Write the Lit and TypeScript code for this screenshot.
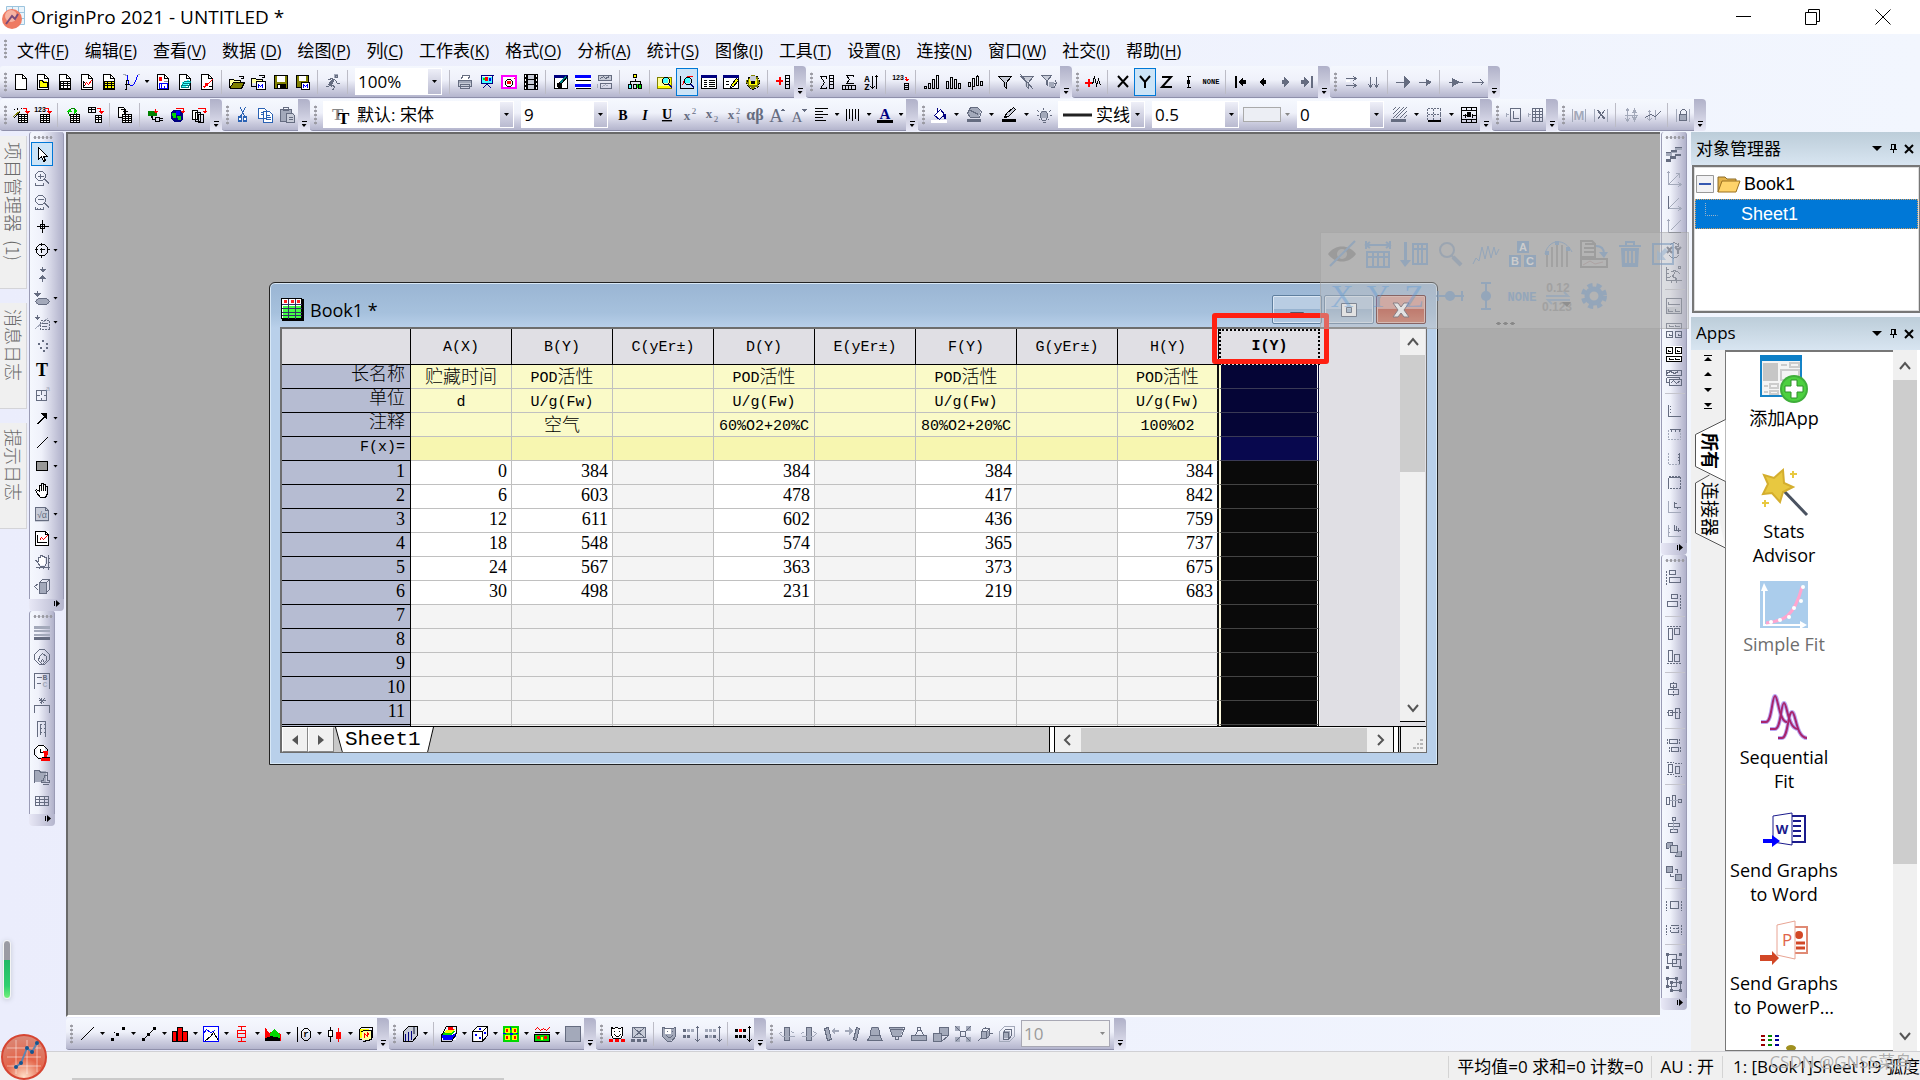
import { LitElement, html, svg, css, nothing, TemplateResult } from "lit";
import { customElement, property } from "lit/decorators.js";
import { classMap } from "lit/directives/class-map.js";

/* ---------- icon notation ----------
 * An icon is a list of layers on a 16x16 grid, parted by "|".
 *   f<colour> <path>   filled path
 *   s<colour> <path>   one pixel stroke, aligned to the pixel grid
 *   S<colour> <path>   two pixel smooth stroke
 *   d<colour> <path>   dotted stroke
 *   t<colour> x y size style text
 */
const COLORS: Record<string, string> = {
  k: "#000", w: "#fff", g: "#656c80", l: "#a3a9ba", r: "#f00", b: "#00f", n: "#000080",
  y: "#ff0", Y: "#ffff9c", o: "#808000", G: "#008000", L: "#00d800", c: "#4ff", t: "#008080",
  m: "#f0f", B: "#2a62b4", e: "#c8ccd8", h: "#999",
};
const FACE: Record<string, string> = {
  b: "font:bold 1px 'Liberation Serif',serif",
  i: "font:italic bold 1px 'Liberation Serif',serif",
  u: "font:bold 1px 'Liberation Serif',serif;text-decoration:underline",
  n: "font:1px 'Liberation Serif',serif",
  s: "font:1px 'Liberation Sans',sans-serif",
  S: "font:bold 1px 'Liberation Sans',sans-serif",
  m: "font:bold 1px 'Liberation Mono',monospace",
};
const PAGE = "fw M2 0h8l4 4v12h-12z|sk M2 0h7l4 4v11h-11z M9 0v4h4|";
const GPAGE = "fe M1 1h11l3 3v12h-14z|sg M1 1h10l3 3v10h-13z M11 1v3h3|";
const GRID = "sk M3 7h10v7h-10z M3 9h10 M3 11h10 M6 7v7 M10 7v7";
const TABLE = "fw M5 7h10v8h-10z|sk M5 7h9v8h-9z M5 9h9 M5 11h9 M5 13h9 M8 7v8 M11 7v8|";
const REDTURN = "sr M9 1h4v3|fr M11 4h6l-3 3z|";
const LENS = "fc M6 4h5v5h-5z|sk M7 3h3l2 2v3l-2 2h-3l-2-2v-3z|sn M11 10l4 4 M12 10l3 3|";

const ICONS: Record<string, string> = {
  "new-project": PAGE,
  "new-folder": PAGE + "fy M4 7h8v6h-8z|sk M4 6h3l1 2h4v5h-8z",
  "new-workbook": PAGE + GRID,
  "new-graph": PAGE + "sk M4 6v7h8 M4 8h1 M4 11h1|sr M5 11l2-3l2 2l3-4",
  "new-matrix": PAGE + "fy M3 7h10v8h-10z|" + GRID,
  "new-function": "sb M4 1c1 14 6 14 10 0|sl M0 0l4 1 M14 0l2 0|sk M5 6h-2v9h-2 M1 10h5",
  "new-layout": PAGE + "fr M4 3h3v4h-3z|sb M4 9h8v5h-8z M6 9v4 M9 11v2|sh M8 7h4",
  "new-notes": PAGE + "fc M5 8l6-2l2 2l-4 5l-5 1z|st M4 12l3-5h6l-2 6h-7z M6 9h6 M5 11h6",
  "new-excel": PAGE + "sr M4 14l9-9 M3 12l3 0l7-7|fr M6 9h3v3h-3z|sk M9 12h3",
  open: "fo M1 14l3-6h11l-3 6z|fY M1 5h4l1 1h5v2h-7l-3 5z|sk M0 13v-8h4l1 1h6v2 M0 14h12l3-6h-11l-4 6 M9 3c2-2 3-2 5 0 M14 1v3h-3",
  "open-template": "fY M0 5h4l1 1h6v3h-11z|sk M0 12v-8h4l1 1h6v2 M7 2c2-2 4-2 6 0 M13 0v3h-3 M0 12h4|fw M5 8h9v8h-9z|sk M5 7h9v8h-9z|sb M7 13v-3l2 2l2-2v3",
  save: "fo M1 1h14v14h-14z|sk M1 1h13v13h-13z|fw M4 2h8v6h-8z|fk M4 10h9v5h-9z|fw M5 11h2v3h-2z",
  "save-template": "fo M1 1h13v13h-13z|sk M1 1h12v12h-12z|fw M4 2h7v5h-7z|fw M6 9h9v7h-9z|sk M6 8h8v7h-8z|sb M8 13v-3l2 2l2-2v3",
  run: "fl M9 0h4v4h-4z|sg M10 1h2v2h-2z M3 5l4-1l3 2l2 3h2 M8 5l-3 5l4 2l-1 3h-2 M5 10l-2 2h-3 M9 5l-3 5 M7 5l-4 5l4 2",
  print: "fe M1 6h14v6h-14z|fw M4 1h8v5h-8z|sg M4 5l1-4h7l-1 4 M1 6h13v6h-13z M3 10h9v4h-9z M1 8h13|fl M2 7h12v2h-12z",
  slideshow: "sn M1 1h13 M2 1v8h11v-8 M7 10l-4 4 M8 10l4 4|fc M3 3h10v6h-10z|fL M4 4h2v2h-2z|fr M6 3h3v4h-3z|fb M10 4h2v3h-2z",
  recorder: "fm M0 1h16v14h-16z|fw M2 3h12v10h-12z|sk M6 5h3l2 2v3l-2 2h-3l-2-2v-3z|fr M6 7h4v3h-4z|sr M12 4h1",
  film: "fk M1 0h14v16h-14z|fe M5 1h6v4h-6z M5 6h6v4h-6z M5 11h6v4h-6z|fw M2 1h1v2h-1z M2 5h1v2h-1z M2 9h1v2h-1z M2 13h1v2h-1z M13 1h1v2h-1z M13 5h1v2h-1z M13 9h1v2h-1z M13 13h1v2h-1z",
  "edit-page": "fw M1 1h13v14h-13z|sk M1 1h13v13h-13z|fn M1 1h14v3h-14z|ft M5 9l7-7l2 2l-6 7z|sk M4 13l4-4l6-7 M4 13l2-5|fk M4 9h5v5h-4z",
  "split-rows": "fw M0 1h16v14h-16z|fb M0 1h16v3h-16z M0 10h16v3h-16z|sk M0 6h15 M0 14h15",
  "split-off": "fe M1 1h13v5h-13z|sg M1 1h13v5h-13z M3 9h11v5h-11z M3 4l3-2l2 2l4-2|sl M0 9v4 M5 12l3-2l3 2",
  tree: "fy M6 0h4v4h-4z|sk M6 0h3v3h-3z M8 4v3 M3 10v-3h10v3|fc M1 10h4v4h-4z|fL M10 10h5v4h-5z|sk M1 10h3v4h-3z M6 10h3v4h-3z M11 10h3v4h-3z",
  "find-folder": "fy M0 3h15v11h-15z|fY M1 4h12v8h-12z|so M0 3h14v11h-14z|" + LENS,
  "find-graph": "sk M1 1v13h13 M1 4h-1 M1 8h-1|sr M3 11l2-6l3-3l5 0|" + LENS,
  "win-list": "fw M0 1h16v14h-16z|sk M0 1h15v13h-15z|fn M0 1h16v3h-16z|sk M2 6h3 M2 8h3 M2 10h3 M2 12h3 M7 6h6 M7 8h6 M7 10h6 M7 12h6",
  "win-edit": "fw M0 1h16v14h-16z|sk M0 1h15v13h-15z|fn M0 1h16v3h-16z|sk M2 7h3 M2 10h3|fy M8 12l5-7l2 2l-5 6z|sk M7 13l1-3l5-6l2 2l-5 6z",
  gear: "fo M6 1h4v14h-4z M1 6h14v4h-14z M3 3h10v10h-10z|fy M4 5h8v6h-8z|dk M4 2l8 0l2 5l-1 5l-5 3l-5-2l-2-5z|fk M6 7h4v3h-4z|fe M5 2h6v5h-6z",
  "add-column": "fr M1 6h7v2h-7z M4 3h2v8h-2z|sk M10 1h4v13h-4z M10 4h4 M10 7h4 M10 10h4",

  "sum-column": "sk M7 2h-6l4 6l-4 6h6v-2 M7 2v2 M10 1h4v13h-4z M10 4h4 M10 7h4 M10 10h4",
  "sum-row": "sk M12 1h-7l3 4l-3 4h7 M12 1v1 M1 11h13v4h-13z M4 11v4 M7 11v4 M10 11v4",
  "sort-az": "tk 4 8 9 m A|tk 4 16 9 m Z|sk M9 1v13 M7 12l2 2l2-2 M13 14v-13 M11 3l2-2l2 2",
  "set-values": "tk 5 6 7 S 123|sr M11 3h2v2|fr M11 5h5l-2 3z|sk M11 9h4v6h-4z M11 11h4 M11 13h4",
  "bars-up": "sk M1 12h2v2h-2z M5 9h2v5h-2z M9 5h2v9h-2z M13 1h2v13h-2z",
  "bars-mix": "sk M1 7h2v7h-2z M5 3h2v11h-2z M9 5h2v9h-2z M13 9h2v5h-2z",
  "bars-stat": "sk M1 8h2v4h-2z M5 4h2v8h-2z M9 2h2v9h-2z M13 7h2v4h-2z M5 12v3 M10 0v2",
  filter: "fe M2 2h12l-5 6v7l-3-3v-4z|sk M1 2h13l-5 6v6l-2-2v-4z",
  "filter-off": "fe M2 2h12l-5 6v6l-3-2v-4z|sg M1 2h13l-5 6v6l-2-2v-4z M1 0l13 15",
  "filter-redo": "fe M1 1h9l-3 5v5l-2-1v-4z|sg M0 1h10l-4 5v5l-1-1v-4z M9 12c3 3 5 0 5-3 M11 9h4l-1-3|fl M8 8h5v5h-5z",

  "add-plot": "fr M0 8h7v2h-7z M3 5h2v8h-2z|sk M7 10l2-8l2 9l2-6l2 6",
  "set-x": "Sk M3 2l10 11 M13 2l-10 11",
  "set-y": "Sk M3 2l5 6l5-6 M8 8v6",
  "set-z": "Sk M3 3h9l-9 10h10",
  "set-err": "sk M7 2v11 M5 2h4 M5 13h4|fk M6 6h3v4h-3z",
  "set-none": "tk 8 10 7 m NONE",
  first: "fk M2 2h2v12h-2z M5 8l5-5v10z M10 6h3v4h-3z",
  prev: "fk M4 8l5-5v10z M9 6h2v4h-2z",
  next: "fg M12 8l-5-5v10z M5 6h2v4h-2z",
  last: "fg M12 2h2v12h-2z M10 8l-5-5v10z M2 6h3v4h-3z",
  "dbl-right": "sg M2 4h11 M2 11h11 M10 2l3 2l-3 2 M10 9l3 2l-3 2|fw M3 6h4v2h-4z",
  "dbl-down": "sg M5 2v11 M11 2v11 M3 10l2 3l2-3 M9 10l2 3l2-3",
  "arrow-big": "sg M0 8h12|fg M9 2l7 6l-7 6z",
  "arrow-mid": "sg M1 8h10|fg M9 5l6 3l-6 4z",
  "arrow-fat": "sg M1 8h14|fg M5 4l8 4l-8 5z",
  "arrow-thin": "sg M2 8h12 M11 5l3 3l-3 3",

  "import-wizard": "sk M0 11l6-6|so M0 9l7-6|sk M1 2l1 1 M4 0v2 M8 1l-1 1|" + TABLE + REDTURN,
  "import-ascii": "tk 5 5 7 S 123|" + TABLE + REDTURN,
  reimport: "fL M1 5l3-3l3 3z M9 1l3 3l-3 3z|sG M3 5c1 5 6 5 8 1 M4 3c2-3 5-3 7 0|" + TABLE,
  "import-sql": "sk M1 0h7v5h-7z M1 2h7 M4 0v5|" + REDTURN + "fw M8 8h7v8h-7z|sk M8 8h6v7h-6z M8 10h6 M8 12h6 M11 8v7",
  "clone-import": "fw M1 0h6v9h-6z|sk M1 0h5l1 1v9h-6z M3 2h5v8 M5 4h5|" + TABLE,
  connect: "fG M1 4h9v5h-9z|sr M8 1v4|fr M6 4h5l-2 3z|fk M4 9h2v2h-2z|sk M8 10h4v4h-4z M12 11h3 M12 13h3 M5 10v2h3",
  "web-connect": "fn M4 3h7l3 3v6l-3 3h-6l-3-3v-6z|fL M3 6h4v5h-3z M8 9h4v4h-3z|fb M7 4h4v4h-4z|sr M6 1h8v3|fr M11 4h5l-2 3z",
  "multi-connect": "fw M1 3h6v9h-6z|sk M1 3h5v9h-5z M4 5h5v9h-5z M7 7h5v8h-5z|sr M6 1h8v3|fr M11 4h5l-2 3z",
  cut: "sB M5 0l4 9 M10 0l-5 9|fB M3 9h4v6h-4z M8 9h4v6h-4z|fw M4 11h2v2h-2z M9 11h2v2h-2z",
  copy: "fw M1 1h8v10h-8z M6 4h9v11h-9z|sB M1 1h6l2 2v8h-8z M6 4h6l3 3v8h-9z M8 8h4 M8 10h5 M8 12h5 M3 5h3 M3 7h3",
  paste: "fl M1 2h11v12h-11z|sg M1 2h11v12h-11z M4 0h5v3h-5z|fe M7 6h8v9h-8z|sg M7 6h6l2 2v7h-8z M9 10h4 M9 12h4",

  bold: "tk 8 13 14 b B",
  italic: "tk 8 13 14 i I",
  underline: "tk 8 12 14 u U",
  super: "tg 6 13 13 b x|tg 13 7 9 n 2",
  sub: "tg 6 11 13 b x|tg 13 15 9 n 2",
  supersub: "tg 6 12 13 b x|tg 13 7 9 n 2|tg 13 16 9 n 1",
  greek: "tg 8 13 16 b αβ",
  "font-up": "tg 7 15 19 n A|fg M12 4l2-3l2 3z",
  "font-down": "tg 6 15 15 n A|fg M11 2h5l-3 3z",
  align: "sk M1 1h13 M1 4h8 M1 7h13 M1 10h8 M1 13h11",
  "align-v": "sk M1 1v12 M4 1v10 M7 1v12 M10 1v10 M13 1v12",
  "font-color": "tn 8 12 15 b A|fk M0 13h16v3h-16z",
  fill: "fw M3 4l6-3l4 5l-6 6z|sn M3 8l6-6l4 5l-5 5l-5-4z M6 0v5|fn M12 7h3v5h-2z|fw M0 13h16v3h-16z",
  "fill-page": "fl M4 0h8l3 4l-2 6h-9l-3-4z|sg M4 0h7l4 4l-2 6h-9l-3-4z M4 3l8 4|fg M1 12h14v3h-14z",
  "line-color": "fe M5 7l7-7l2 2l-7 7z|sk M3 10l2-4l7-6l2 2l-7 7z|fk M1 12h14v3h-14z",
  bulb: "fl M5 4h6v7h-6z|sg M6 4h3l2 2v4l-2 3h-3l-2-3v-4z M7 0v2 M1 3l2 2 M14 3l-2 2 M0 8h2 M13 8h2 M2 13l1-1 M13 13l-1-1 M6 15h3",
  hatch: "sg M1 3l3-3 M1 7l7-7 M1 11l11-11 M4 11l11-11 M8 11l7-7 M12 11l3-3|fg M0 12h15v3h-15z",
  border: "dg M1 1h13 M1 7h13 M1 1v11 M7 1v11 M14 1v11|sk M1 13h13 M1 14h13",
  merge: "sk M0 0h15v15h-15z M0 3h15 M0 12h15 M5 0v3 M10 0v3 M5 12v3 M10 12v3 M1 8h4 M11 8h3 M4 6v4 M11 6v4|fk M6 5h4v5h-4z",

  "add-layer": "sg M5 1h10v13h-10z M8 3v8h5|sl M0 7h3 M1 5v4",
  "add-table": "sg M5 1h10v13h-10z M5 4h10 M5 7h10 M5 10h10 M8 1v13 M12 1v13|sl M0 7h3 M1 5v4",
  "mask-m": "sl M1 1v13 M14 1v13|tl 8 13 13 S M",
  "mask-x": "sl M1 1v13 M14 1v13|sg M4 3l7 9 M11 3l-7 9 M5 3l7 9",
  "expand-v": "sl M4 1v13 M2 4l2-3l2 3 M2 11l2 3l2-3 M11 1v13 M9 6l2-4l2 4 M9 9l2 4l2-4 M1 8h13",
  "expand-line": "sl M4 3v10 M2 5l2-2l2 2 M2 11l2 2l2-2 M10 2v10|sg M0 10l5-3l5 2l5-5",
  lock: "sl M1 1v13 M14 1v13|fl M4 7h8v6h-8z|sg M4 7h7v6h-7z M5 7v-3l2-2h2l2 2v3",

  pointer: "fw M5 2l8 8h-4l2 4l-2 1l-2-4l-2 2z|sk M4 1v12l3-3l2 5l2-1l-2-4h4z",
  "zoom-in": "sg M4 1h4l3 3v3l-3 3h-4l-3-3v-3z M6 3v5 M3 6h6 M10 9l5 5 M11 9l4 4 M1 12v3h8v-3",
  "zoom-out": "sg M4 1h4l3 3v3l-3 3h-4l-3-3v-3z M3 5h6 M10 9l5 5 M11 9l4 4 M1 12v3h8v-3 M3 15v-2 M6 15v-2",
  "screen-reader": "sk M8 1v13 M2 8h12 M6 6h4v4h-4z",
  "data-reader": "sk M5 2h5l3 3v5l-3 3h-5l-3-3v-5z M7 0v3 M7 12v3 M0 7h3 M12 7h3 M7 5v5 M5 7h5",
  "data-selector": "sg M8 0v5 M8 10v5|fg M5 3h7l-3 4z M5 13l3-4l4 4z",
  "region-mask": "sg M3 0v5|fg M0 3h7l-4 4z|fl M2 9h13v5h-13z|sg M4 8h8l3 3l-3 3h-8l-3-3z",
  "region-select": "sg M3 0v4|fg M0 3h7l-4 3z|sl M1 14l13-11|dg M6 6h9v9h-9z|sg M7 9h6 M7 12h5",
  "draw-data": "fg M4 5h2v2h-2z M8 2h2v2h-2z M12 5h2v2h-2z M6 9h2v2h-2z M9 12h2v2h-2z M12 9h2v2h-2z",
  "text-tool": "tk 8 14 18 b T",
  annotate: "sg M2 4h10v10h-10z M7 4v4 M7 11v3 M2 9h3 M9 9h3|tl 14 5 7 s a",
  "arrow-tool": "sk M2 14l10-10 M3 14l9-9|fk M6 3h7v7z",
  "line-tool": "sk M2 14l11-11",
  "rect-tool": "fh M2 3h12v10h-12z|sk M2 3h11v9h-11z",
  hand: "fw M4 4h8v8l-2 3h-4l-4-5z|sk M3 10l-2-2l1-1l3 2v-6h2v5v-7h2v7v-6h2v6v-4h2v7l-2 4h-5l-4-5",
  equation: GPAGE + "tg 8 12 9 s √α",
  "graph-object": "fw M1 1h14v14h-14z|sk M1 1h10l3 3v11h-13z M11 1v3h3 M3 4v8h9|sr M5 10l2-3l2 2l4-4",
  "hand-scale": "fw M5 3h6v8h-6z|sg M3 8l-2-2l3 1v-4h2v-2h2v1h2v1h2v6l-2 3h-4l-3-4 M14 0v15 M1 13h14 M13 4h2 M13 8h2 M5 12v2 M9 12v2",
  cube: "fl M5 4h8v11h-8z|sg M5 4h7v11h-7z M5 4l3-3h7v10l-3 3 M12 4l3-3 M4 5l-4 3l4 4",

  "line-width": "fl M0 1h16v3h-16z M0 5h16v2h-16z M0 9h16v2h-16z|fg M0 12h16v3h-16z",
  radial: "sg M5 0h5l5 5v5l-5 5h-5l-5-5v-5z M5 7l3-3l4 3v4l-4 4l-4-4z M6 13l2-3l2 3",
  legend: "sg M0 15v-15h15v15 M2 4h5 M2 10h4|tg 11 7 8 m B|tl 11 14 8 m C",
  asterisk: "sg M0 15v-7h15v7 M5 1l5 5 M10 1l-5 5 M4 3h7 M7 0v6",
  "color-scale": "sg M3 15v-15h8v15 M5 3h2 M5 7h2 M5 11h2 M9 3h2 M9 7h2 M9 11h2 M6 2v11",
  "date-stamp": "fw M3 0h8v12h-8z|sk M4 0h5l4 4v5l-4 4h-5l-4-4v-5z M6 3v4h4|fr M9 6h5v4h-1v3h3v3h-9v-3h3v-3z|sk M7 12h8",
  "project-stamp": "fl M0 2h12v11h-12z|sg M0 13v-12h5l1 2h7v3 M10 6h3v5h2v2h-8v-2h2z M8 15h6",
  table: "sg M1 3h13v9h-13z M1 6h13 M1 9h13 M5 3v9 M10 3v9",

  "line-plot": "sk M1 14l13-13",
  scatter: "fk M1 12h3v3h-3z M6 7h3v3h-3z M12 1h3v3h-3z M4 6h1v1h-1z",
  "line-symbol": "sk M2 13l11-11|fk M1 12h3v3h-3z M6 7h3v3h-3z M12 1h3v3h-3z",
  column: "fr M1 5h4v10h-4z M6 1h4v14h-4z M11 5h4v10h-4z|sk M0 5h4v10h-4z M5 1h5v14h-5z M10 5h5v10h-5z",
  "multi-curve": "fw M0 0h16v16h-16z|sb M0 0h15v15h-15z M0 7l3-4l4 3l5-2|sk M2 14l5-4l3-4l5 8",
  box: "sr M3 0h8 M7 0v4 M3 4h8v7h-8z M3 7h8 M7 11v4 M3 15h8",
  area: "fr M0 1l4 6l5-2l7 3v7h-16z|fL M5 8l4-5l6 6v5h-8z|fk M0 12l6-2l9 2v3h-15z",
  polar: "sk M1 0v15 M8 2h3l3 3v6l-3 3h-3l-3-3v-6z|tk 10 11 9 m r",
  candle: "sk M3 0v15|fw M1 4h4v6h-4z|sk M1 4h4v6h-4z|sr M11 1v14|fr M9 6h5v7h-5z",
  "template-lib": "fy M1 3h10v9h-10z|sk M1 3l2-2h11v10l-2 2h-11z|fY M4 5h9v9h-9z|sk M3 5l3-1h7v9l-8 2|sr M6 11v-4l3 3v-4l2 3",
  "bars-3d": "fe M2 5l5-5h8v9l-5 6h-8z|sk M1 5l5-5h9v9l-5 6h-9z|sn M3 7v7 M6 5v9 M9 4v9|fg M11 1h2v7h-2z",
  "surface-3d": "fw M1 5h14v9h-14z|fb M1 9h10l4-2v3l-4 4h-9z|fL M2 7l5-2h7l-4 4h-8z|fy M4 5l4-2h6l-3 4h-7z|fr M7 1h5l1 3h-6z|sk M0 9l5-9h10v7l-5 8h-10z",
  "scatter-3d": "fw M2 4l5-4h8v9l-5 6h-8z|sk M0 5l5-5h10v9l-5 6h-10z M0 5h10v10 M10 5l5-5|fb M3 8h2v2h-2z M7 11h2v2h-2z M7 2h2v2h-2z M12 6h2v2h-2z",
  contour: "fL M0 0h16v16h-16z|fy M2 2h5v5h-5z M9 2h5v5h-5z M2 9h5v5h-5z M9 9h5v5h-5z|fr M3 3h2v3h-2z M11 3h2v3h-2z M3 10h2v3h-2z M11 10h2v3h-2z|fb M7 1h1v3h-1z M0 7h3v1h-3z M7 7h3v2h-3z M13 7h2v1h-2z",
  "contour-line": "sr M0 4l3-3l3 3l3-2l3 2l3-3|sk M0 6h15 M0 8h15v7h-15z|fL M1 9h14v6h-14z|fr M3 10h3v3h-3z M10 10h3v3h-3z|fy M7 11h2v3h-2z",
  image: "fl M0 0h16v16h-16z|sg M0 0h15v15h-15z",
  clown: "fw M2 2h12v10h-12z|sk M2 1l2 1l3-1l3 1l3-1v8l-2 3h-7l-2-3z M5 4v1 M10 4v1 M5 8l2 2h2l2-2|fr M0 13h4v3h-4z M6 13h4v3h-4z M12 13h4v3h-4z",
  "clown-off": "fe M2 2h12v10h-12z|sg M1 1h13v10h-13z M2 1l11 10 M13 1l-11 10|fg M0 13h4v3h-4z M6 13h4v3h-4z M12 13h4v3h-4z",
  mask: "fl M2 2h12v8l-4 5h-4l-4-5z|fw M4 3h6v5h-6z|sg M1 1l4 1h6l3-1v9l-4 5h-4l-5-5z M5 5h1 M10 5h1 M5 9l2 2h2l2-2",
  "rows-a": "fg M0 3h3v3h-3z M0 9h3v3h-3z M4 9h3v3h-3z|fl M4 3h3v3h-3z M8 3h3v3h-3z|sg M14 0v15 M12 2l2-2l2 2 M12 13l2 2l2-2",
  "rows-b": "fl M0 3h3v3h-3z M4 3h3v3h-3z M8 3h3v3h-3z M4 9h3v3h-3z|fg M0 9h3v3h-3z M8 9h3v3h-3z|sg M14 0v15 M12 2l2-2l2 2 M12 13l2 2l2-2",
  "rows-c": "fk M0 3h3v3h-3z M8 3h3v3h-3z M0 9h3v3h-3z M4 9h3v3h-3z M8 9h3v3h-3z|fr M4 3h3v3h-3z|sk M14 0v15 M12 2l2-2l2 2 M12 13l2 2l2-2",
  "spin-l": "fl M5 1h6v13h-6z|sg M5 1h5v13h-5z|sl M3 5l-3 2l3 3h12 M12 5l3 2",
  "spin-r": "fl M5 1h6v13h-6z|sg M5 1h5v13h-5z|sl M12 5l3 2l-3 3h-12 M3 5l-3 2",
  "tilt-l": "fl M1 2l4-1l3 12l-3 1z|sg M1 2l4-1l3 12l-4 1z|fl M8 5l4-4v3h4v2h-4v3z",
  "tilt-r": "fl M11 1l4 1l-4 13l-3-1z|sg M11 1l3 1l-3 12l-3-1z|fl M8 5l-4-4v3h-4v2h4v3z",
  "persp-up": "fl M4 1h8v7l3 7h-14l3-7z|sg M5 1h5l2 3v5l3 5h-15l3-5v-5z M0 14h15 M2 9h11",
  "persp-down": "fl M1 1h14l-3 9h-8z|sg M0 1h15l-3 9h-9z M6 10v3h3v-3 M0 3h15",
  camera: "fl M1 9h14v5h-14z|sg M0 9h15v5h-15z M4 9l2-5h4l2 5 M6 1h3v3h-3z",
  "cube-pair": "fl M1 7h8v8h-8z M7 1h8v8h-8z|sg M0 7h8v8h-8z M6 7v-6h9v8h-7 M8 15l7-6",
  "fit-frame": "fl M0 0h5v5h-5z M11 0h5v5h-5z M0 11h5v5h-5z M11 11h5v5h-5z|sg M5 5h5v5h-5z M0 0l5 5 M15 0l-5 5 M0 15l5-5 M15 15l-5-5",
  "axis-cube": "fl M4 5h8v7h-8z|sg M4 5l2-3h6v7l-3 3h-5z M4 5h5v7 M9 5l3-3 M0 15l4-4 M12 7h3 M8 0v2",
  "frame-cube": "fl M4 5h7v7h-7z|sg M4 6l2-3h6v6l-3 4h-5z M4 6h5v7|sl M0 5l5-5h10v10l-5 5h-10z",

  gradient: "fl M0 7h6v3h-6z M5 5h6v2h-6z M9 2h7v2h-7z|fg M5 4h6v2h-6z M9 1h7v1h-7z M0 6h5v1h-5z M0 13h5v3h-5z M4 10h6v3h-6z M9 8h6v2h-6z",
  "axes-3": "sl M2 1v13h12 M2 14l10-10 M0 3l2-2l2 2 M12 12l3 2l-3 2 M9 3h4v4",
  "axes-z": "sg M2 1v13|sl M2 14h12 M2 14l10-10 M12 12l3 2l-3 2",
  "axes-y": "sl M2 1v13 M0 3l2-2l2 2|sg M2 14h12|sl M4 12l10-10",
  "swap-xy": "Sg M1 5l5 6 M6 5l-5 6 M9 5l3 3l3-3 M12 8v4|sg M3 3c3-4 7-3 9 0 M12 0v4h-4 M12 13c-3 4-7 3-9 0",
  rescale: "sg M0 0v14h15 M0 3h2 M0 7h2 M0 11h2 M5 14v2 M10 14v2|sg M12 0h2v2h-2z M5 5l4-1l3 2l2 2 M9 5l-3 5l4 2l-1 2 M5 10l-3 1",
  "layers-one": "sg M0 0h15v15h-15z M2 3v3h11|fe M1 9h14v6h-14z|sg M2 10v3h4 M9 10v3h4",
  "layers-four": "sg M0 1h15v5h-15z M3 2v2h4 M9 2v2h4 M0 9h6v6h-6z M9 9h6v6h-6z M3 11v2h2 M12 11v2h2",
  "layers-merge": "fw M0 0h16v16h-16z|sk M0 1h6v6h-6z M9 1h6v6h-6z M2 3v2h2 M11 3v2h2 M0 10h15v5h-15z M3 11v2h4 M9 11v2h4",
  "layers-stack": "sg M0 0h15v5h-15z M0 3l4-2l4 2l4-2 M0 7h13v2 M0 7v5h3 M3 9h12v6h-12z M4 13l3-3l3 3l4-3",
  "axis-lb": "sg M2 2v12h12 M3 4h1 M3 7h1 M3 10h1",
  "axis-t": "sg M3 3h11 M5 3v2 M9 3v2 M13 3v2|dl M2 3v10h12v-10",
  "axis-r": "sg M13 2v12 M11 4h2 M11 7h2 M11 10h2|dl M2 2v12h11",
  "axis-box": "dg M2 2h12v12h-12z|sg M2 3v11 M2 3h12",
  "axis-inset": "sl M2 2v12h12|sg M8 3v6h6 M8 5h2 M11 8v2",
  "axis-inset2": "sl M2 2v12h12 M2 6h1 M2 10h1|sg M8 2v6h6 M10 3v4 M12 5v4",
  "al-left": "dg M0 1v14|sg M3 1h6v4h-6z M3 8h11v5h-11z",
  "al-right": "dg M14 1v14|sg M5 1h6v4h-6z M1 8h10v5h-10z",
  "al-top": "dg M0 1h15|sg M2 3h4v11h-4z M8 3h5v6h-5z",
  "al-bottom": "dg M0 14h15|sg M2 1h4v11h-4z M8 5h5v7h-5z",
  "al-center": "sg M4 2h6v4h-6z M2 8h10v5h-10z|dg M7 0v15",
  "al-middle": "sg M2 5h4v5h-4z M9 3h4v10h-4z|dg M0 7h15",
  "same-w": "sg M3 2h8v4h-8z M5 10h7v4h-7z|dg M1 1v6 M13 1v6 M3 9v6 M14 9v6",
  "same-h": "sg M2 3h4v8h-4z M9 5h4v7h-4z|dg M0 1h7 M8 2h7 M0 13h7 M8 15h7",
  "dist-h": "sg M0 4h3v7h-3z M6 2h3v11h-3z M12 6h3v3h-3z|sl M3 7h9",
  "dist-v": "sg M6 0h3v3h-3z M2 6h11v3h-11z M4 12h7v3h-7z|sl M7 3v9",
  front: "fl M1 1h6v6h-6z M10 10h5v5h-5z|sg M0 1h6v2 M0 1v6h2 M15 9v6h-6v-2|fe M4 4h7v7h-7z|sg M4 4h7v7h-7z",
  back: "fl M0 1h7v6h-7z M9 9h6v6h-6z|sg M0 1h6v6h-6z M9 9h6v6h-6z M8 4h3v3 M4 8v3h3",
  "grp-a": "sg M4 4h8v7h-8z|dg M0 3v10 M15 3v10",
  "grp-b": "dg M4 4h8v7h-8z M6 7h5|sg M4 4h8 M4 11h8|dg M0 3v10 M15 3v10",
  group: "sg M1 1h9v9h-9z M6 6h8v7h-8z|fg M0 0h3v3h-3z M13 0h3v3h-3z M0 13h3v3h-3z M13 13h3v3h-3z",
  ungroup: "sg M1 1h9v8h-9z M5 5h9v8h-9z|fg M0 0h3v3h-3z M9 0h3v3h-3z M0 8h3v3h-3z M4 4h3v3h-3z M13 4h3v3h-3z M4 12h3v3h-3z M13 12h3v3h-3z",
};

function layer(part: string) {
  const kind = part[0];
  const color = COLORS[part[1]];
  const d = part.slice(3);
  if (kind === "f") return svg`<path fill=${color} d=${d}></path>`;
  if (kind === "S") return svg`<path fill="none" stroke=${color} stroke-width="2" shape-rendering="auto" d=${d}></path>`;
  if (kind === "t") {
    const [x, y, size, style, text] = d.split(" ");
    return svg`<text x=${x} y=${y} fill=${color} text-anchor="middle" style="${FACE[style]};font-size:${size}px">${text}</text>`;
  }
  return svg`<path fill="none" stroke=${color} stroke-dasharray=${kind === "d" ? "2 1" : nothing}
    transform="translate(.5 .5)" d=${d}></path>`;
}

function icon(name: string) {
  const parts = (ICONS[name] ?? "").split("|").filter(Boolean);
  return html`<svg class="icon" viewBox="0 0 16 16" width="16" height="16" shape-rendering="crispEdges" aria-hidden="true">${parts.map(layer)}</svg>`;
}

/* Toolbar entries: an icon name, "-" for a separator, a trailing "v" marks a drop-down arrow. */
type Entry = string | TemplateResult;

const barStyles = css`
  * { box-sizing: border-box; }
  button, select { font: inherit; color: inherit; margin: 0; padding: 0; border: 0; background: none; }
  svg { display: block; overflow: visible; }
  .bar { display: flex; height: 32px; width: max-content; }
  .body {
    display: flex; align-items: center;
    background: linear-gradient(#f5f8fe, #eff1fa 45%, #cdcee0 75%, #b4b5cd);
    border-bottom: 1px solid #8f90ab; border-radius: 3px 0 0 3px;
  }
  .line { display: flex; }
  .grip { width: 10px; height: 20px; background: radial-gradient(#9a9aa2 50%, transparent 55%) 4px 0 / 3px 4px repeat-y; }
  .btn { display: flex; width: 22px; height: 28px; align-items: center; justify-content: center; }
  .btn.on { background: #cce4f7; border: 1px solid #0078d7; }
  .drop { display: flex; height: 28px; width: 10px; align-items: center; justify-content: center; }
  .wide .drop { width: 13px; }
  .tight .drop { width: 9px; }
  .caret { width: 5px; height: 3px; background: #000; clip-path: polygon(0 0, 100% 0, 50% 100%); }
  .sep { width: 8px; height: 24px; background: linear-gradient(#bcbcc6, #bcbcc6) 3px 0 / 1px 100% no-repeat; }
  .cap {
    width: 12px; height: 32px; display: flex; flex-direction: column; align-items: center; justify-content: flex-end; gap: 2px;
    padding-bottom: 4px; background: linear-gradient(#b0b1c9, #c4c5d8 40%, #e8e8f6); border-radius: 0 4px 3px 0;
  }
  .cap i { width: 5px; height: 1px; background: #000; }

  .column .bar { flex-direction: column; height: auto; width: 26px; }
  .column .bar.broad { width: 35px; }
  .column .body {
    flex-direction: column; align-items: flex-start; padding: 0 0 1px 1px;
    background: linear-gradient(90deg, #f5f8fe, #eff1fa 35%, #cdcee0 70%, #b0b1ca);
    border: solid #9a9bb5; border-width: 0 1px; border-radius: 3px 3px 0 0;
  }
  .column .grip { height: 10px; width: 20px; margin-left: 2px; background: radial-gradient(#9a9aa2 50%, transparent 55%) 0 4px / 4px 3px repeat-x; }
  .column .btn, .column .drop { height: 24px; }
  .column .drop { width: 5px; }
  .column .sep { width: 20px; height: 8px; margin-left: 2px; background: linear-gradient(#c4c4cc, #c4c4cc) 0 3px / 100% 1px no-repeat; }
  .column .cap { width: 100%; height: 12px; flex-direction: row; padding: 2px 4px 5px; gap: 1px; background: linear-gradient(90deg, #e8e8f6, #b4b5cd); border-radius: 0 0 4px 4px; }
  .column .cap i { width: 1px; height: 5px; }
  .column .cap .caret { width: 4px; height: 7px; clip-path: polygon(0 0, 100% 50%, 0 100%); }
`;

@customElement("tool-bar")
class ToolBar extends LitElement {
  @property({ attribute: false }) entries: Entry[] = [];
  @property() mode = "";
  @property() active = "";
  static styles = [
    barStyles,
    css`
      :host { display: block; font: 17px "Open Sans", "Noto Sans CJK SC", sans-serif; color: #000; }
      .combo { display: grid; grid-template-columns: 1fr 13px; height: 27px; background: #fff; border: 1px solid #fff; margin: 0 4px 0 3px; align-items: center; }
      .combo select { grid-area: 1 / 1 / 2 / 3; appearance: none; height: 25px; padding: 0 13px 0 2px; width: 100%; text-overflow: clip; }
      .combo .end { grid-area: 1 / 2; height: 25px; background: linear-gradient(#eeeff8, #b9bad0); display: grid; place-items: center; pointer-events: none; }
      .combo .mark { grid-area: 1 / 1; pointer-events: none; z-index: 1; padding-left: 5px; }
      .combo.marked select { padding-left: 33px; }
      .combo.lined select { padding-left: 37px; }
      .combo.lined .mark { padding-left: 0; }
      .combo.off { background: #f0f0f0; border: 1px solid #a8a8b4; color: #777; }
      .combo.off .end { background: none; }
      .combo.off .caret { background: #888; }
      .swatch { display: flex; align-items: center; gap: 4px; width: 51px; }
      .swatch b { width: 38px; height: 15px; background: #eceef4; border: 1px solid #aaa; }
      .swatch .caret { background: #888; }
    `,
  ];
  private entry(e: Entry) {
    if (typeof e !== "string") return e;
    if (e === "-") return html`<span class="sep"></span>`;
    const drop = e.endsWith(" v");
    const name = drop ? e.slice(0, -2) : e;
    return html`<span class="line"
      ><button class=${classMap({ btn: true, on: name === this.active })} aria-label=${name}>${icon(name)}</button>${drop
        ? html`<button class="drop" aria-label="${name} options"><span class="caret"></span></button>`
        : nothing}</span>`;
  }
  render() {
    const column = this.mode.includes("column");
    const broad = this.mode.includes("broad");
    return html`<div class=${classMap({ column, wide: this.mode === "wide", tight: this.mode === "tight" })}>
      <div class=${classMap({ bar: true, broad })} role="toolbar">
        <div class="body"><span class="grip"></span>${this.entries.map((e) => this.entry(e))}</div>
        <button class="cap" aria-label="more"><i></i><span class="caret"></span></button>
      </div>
    </div>`;
  }
}

interface ComboOptions { value: string; width: number; label: string; kind?: string; mark?: TemplateResult; }
const combo = ({ value, width, label, kind = "", mark }: ComboOptions) => html`<span class="combo ${kind}" style="width:${width}px">
  ${mark ? html`<span class="mark">${mark}</span>` : nothing}
  <select aria-label=${label} ?disabled=${kind === "off"}><option>${value}</option></select>
  <span class="end"><span class="caret"></span></span></span>`;

const TT = html`<svg width="24" height="20" viewBox="0 0 24 20"><text x="3" y="15" font-family="Liberation Serif" font-weight="bold" font-size="17" fill="#888">T</text><text x="9" y="19" font-family="Liberation Serif" font-weight="bold" font-size="17">T</text></svg>`;
const SOLID = html`<svg width="34" height="4"><path d="M4 2h29" stroke="#222" stroke-width="3"></path></svg>`;

type BarRow = [Entry[], string];
const ROW1: BarRow[] = [
  [["new-project", "new-folder", "new-workbook", "new-graph", "new-matrix", "new-function v", "new-layout", "new-notes", "new-excel", "-",
    "open", "open-template", "save", "save-template", "-", "run", "-", combo({ value: "100%", width: 87, label: "缩放" }), "-",
    "print", "slideshow", "recorder", "film", "-", "edit-page", "split-rows", "split-off", "-", "tree", "-",
    "find-folder", "find-graph", "win-list", "win-edit", "gear", "-", "add-column"], "find-graph"],
  [["sum-column", "sum-row", "sort-az", "-", "set-values", "-", "bars-up", "bars-mix", "bars-stat", "-", "filter", "filter-off", "filter-redo"], ""],
  [["add-plot", "-", "set-x", "set-y", "set-z", "set-err", "set-none", "-", "first", "prev", "next", "last"], "set-y"],
  [["dbl-right", "dbl-down", "-", "arrow-big", "arrow-mid", "-", "arrow-fat", "arrow-thin"], ""],
];
const ROW2: BarRow[] = [
  [["import-wizard", "import-ascii", "-", "reimport", "import-sql", "-", "clone-import", "-", "connect", "web-connect", "multi-connect"], ""],
  [["cut", "copy", "paste"], ""],
  [[combo({ value: "默认: 宋体", width: 191, label: "字体", kind: "marked", mark: TT }), combo({ value: "9", width: 87, label: "字号" }),
    "bold", "italic", "underline", "super", "sub", "supersub", "greek", "font-up", "font-down", "align v", "align-v v", "font-color v"], ""],
  [["fill v", "fill-page v", "line-color v", "bulb",
    combo({ value: "实线", width: 87, label: "线型", kind: "lined", mark: SOLID }), combo({ value: "0.5", width: 87, label: "线宽" }),
    html`<span class="swatch"><b></b><span class="caret"></span></span>`,
    combo({ value: "0", width: 87, label: "图案" }), "hatch v", "border v", "merge"], "wide"],
  [["add-layer", "add-table"], ""],
  [["mask-m", "mask-x", "-", "expand-v", "expand-line", "-", "lock"], ""],
];
const BOTTOM: BarRow[] = [
  [["line-plot v", "scatter v", "line-symbol v", "column v", "multi-curve v", "box v", "area v", "polar v", "candle v", "template-lib"], "tight"],
  [["bars-3d v", "-", "surface-3d v", "scatter-3d v", "contour v", "contour-line v", "image"], "tight"],
  [["clown", "clown-off", "-", "mask", "rows-a", "rows-b", "-", "rows-c"], ""],
  [["spin-l", "spin-r", "tilt-l", "tilt-r", "persp-up", "persp-down", "camera", "cube-pair", "fit-frame", "axis-cube", "frame-cube",
    combo({ value: "10", width: 89, label: "角度", kind: "off" })], ""],
];
const LEFT_TOOLS = ["pointer", "zoom-in", "zoom-out", "screen-reader", "data-reader v", "data-selector", "region-mask v", "region-select v",
  "draw-data", "text-tool", "annotate", "arrow-tool v", "line-tool v", "rect-tool v", "hand", "equation v", "graph-object v", "hand-scale", "cube"];
const LEFT_OBJECTS = ["line-width", "radial", "legend", "asterisk", "color-scale", "date-stamp", "project-stamp", "table"];
const RIGHT_GRAPH = ["gradient", "axes-3", "axes-z", "axes-y", "swap-xy", "rescale", "-", "layers-one", "layers-four", "layers-merge", "layers-stack", "-",
  "axis-lb", "axis-t", "axis-r", "axis-box", "axis-inset", "axis-inset2"];
const RIGHT_ALIGN = ["al-left", "al-right", "-", "al-top", "al-bottom", "-", "al-center", "al-middle", "-", "same-w", "same-h", "-",
  "dist-h", "dist-v", "front", "back", "-", "grp-a", "grp-b", "-", "group", "ungroup"];

const MENUS: [string, string][] = [["文件", "F"], ["编辑", "E"], ["查看", "V"], ["数据 ", "D"], ["绘图", "P"], ["列", "C"], ["工作表", "K"],
  ["格式", "O"], ["分析", "A"], ["统计", "S"], ["图像", "I"], ["工具", "T"], ["设置", "R"], ["连接", "N"], ["窗口", "W"], ["社交", "I"], ["帮助", "H"]];

/* ---------- worksheet ---------- */
const COLS = ["A(X)", "B(Y)", "C(yEr±)", "D(Y)", "E(yEr±)", "F(Y)", "G(yEr±)", "H(Y)", "I(Y)"];
const LABELS: [string, string[]][] = [
  ["长名称", ["贮藏时间", "POD活性", "", "POD活性", "", "POD活性", "", "POD活性", ""]],
  ["单位", ["d", "U/g(Fw)", "", "U/g(Fw)", "", "U/g(Fw)", "", "U/g(Fw)", ""]],
  ["注释", ["", "空气", "", "60%O2+20%C", "", "80%O2+20%C", "", "100%O2", ""]],
  ["F(x)=", ["", "", "", "", "", "", "", "", ""]],
];
const DATA: (number | null)[][] = [
  [0, 384, null, 384, null, 384, null, 384, null],
  [6, 603, null, 478, null, 417, null, 842, null],
  [12, 611, null, 602, null, 436, null, 759, null],
  [18, 548, null, 574, null, 365, null, 737, null],
  [24, 567, null, 363, null, 373, null, 675, null],
  [30, 498, null, 231, null, 219, null, 683, null],
];

/* Han characters take a full em, Latin half of it. */
const mixed = (text: string) =>
  text.split(/([\u4e00-\u9fff]+)/).filter(Boolean).map((s) => (/[\u4e00-\u9fff]/.test(s) ? html`<span class="han">${s}</span>` : s));

const chevron = (d: string) => html`<svg width="12" height="12" viewBox="0 0 12 12"><path d=${d} fill="none" stroke="#555" stroke-width="2"></path></svg>`;
const UP = "M1 9l5-6l5 6", DOWN = "M1 3l5 6l5-6", LEFT = "M8 1l-5 5l5 5", RIGHT = "M4 1l5 5l-5 5";

@customElement("book-window")
class BookWindow extends LitElement {
  static styles = css`
    * { box-sizing: border-box; }
    :host { display: flex; flex-direction: column; font: 18px "Open Sans", "Noto Sans CJK SC", sans-serif; color: #000;
      background: linear-gradient(#9ab5d3, #a6c1dd 30px, #b9d0ea 45px); border: 1px solid #222; border-radius: 6px 6px 0 0;
      box-shadow: inset 0 0 0 1px #d8e8f6; padding: 0 10px 11px 10px; }
    button { border: 0; padding: 0; background: none; font: inherit; }
    svg { display: block; }
    .title { display: flex; height: 44px; gap: 6px; align-items: center; padding: 9px 1px 0; }
    .title h2 { flex: 1; font: inherit; margin: 0; }
    .ctl { display: flex; gap: 2px; }
    .ctl button { width: 50px; height: 29px; border: 1px solid #5f7f9f; border-radius: 2px; box-shadow: inset 0 0 0 1px #dbe7f4;
      background: linear-gradient(#b9cde3 48%, #97b3d0 50%, #b4cbe3); display: grid; place-items: center; }
    .ctl .x { border-color: #5a1a1a; background: linear-gradient(#dd9a8e 46%, #c0442e 50%, #cf6a50); box-shadow: inset 0 0 0 1px #e9b6aa; }
    .client { flex: 1; min-height: 0; display: grid; grid-template: minmax(0, 1fr) 26px / minmax(0, 1fr) 26px; border: 1px solid #6d6d6d; border-width: 2px 1px 1px 2px; background: #e0dfe4; }
    .sheet { overflow: hidden; }
    table { border-collapse: separate; border-spacing: 0; table-layout: fixed; width: 1038px; font: 15px/20px "Liberation Mono", monospace; }
    th, td { height: 24px; padding: 0 4px; border: solid #c0c0c0; border-width: 0 1px 1px 0; white-space: nowrap; font-weight: 400; vertical-align: top; }
    thead th { height: 36px; background: #e0dfe4; border-color: #000; vertical-align: middle; padding: 2px 0 0; }
    tbody th { background: #b6bcd2; border-color: #000; text-align: right; padding: 1px 5px 0 0; }
    .num { font: 18px/21px "Liberation Serif", serif; }
    tbody th.num { padding-top: 0; }
    td.num { text-align: right; background: #fff; }
    .corner { width: 129px; }
    .han { font-family: "Noto Sans CJK SC", sans-serif; font-weight: 300; font-size: 18px; line-height: 0; vertical-align: -1px; }
    .label { background: #fafac8; text-align: center; line-height: 19px; padding: 4px 0 0; }
    .fx { background: #f7f6b0; }
    td { background: #f4f4f4; }
    td.sel { background: #0a0a0a; border-color: #444; border-left: 2px solid #fffbe0; border-right: 3px double #f4f4f4; }
    td.sel.label { background: #050536; border-color: #3a3a55; border-left-color: #ffffd0; border-right-color: #f4f4f4; }
    td.sel.fx { background: #08084e; }
    td.pre { border-right: 2px solid #111; }
    thead th.sel { font-weight: 700; border: 2px dotted #000; padding-top: 0; }
    .vbar { display: flex; flex-direction: column; align-items: center; background: #f0f0f0; border-bottom: 1px solid #000; margin: 0 1px 4px 0; }
    .vbar button { height: 26px; width: 24px; display: grid; place-items: center; }
    .vbar .thumb { width: 100%; height: 117px; background: #cdcdcd; margin-bottom: auto; }
    .tabs { display: flex; align-items: stretch; border-top: 1px solid #000; background: #c8c8c8; min-width: 0; }
    .nav { width: 26px; background: #f0f0f0; border: 1px solid #888; border-left-color: #fff; border-top-color: #fff; display: grid; place-items: center; }
    .edge { background: #000; display: grid; clip-path: polygon(0 0, 100% 0, 94% 100%, 7% 100%); margin-left: 1px; }
    .tab { width: 97px; background: #fff; clip-path: polygon(0 0, 100% 0, 94% 100%, 7% 100%); margin: 0 1px 1px; font: 21px/25px "Liberation Mono", monospace; text-align: left; padding-left: 9px; }
    .fill { flex: 1; }
    .hbar { width: 340px; display: flex; align-items: center; background: #f0f0f0; border: solid #000; border-width: 0 1px; box-shadow: -4px 0 #fff, -5px 0 #000, 4px 0 #fff, 5px 0 #000; margin-right: 6px; }
    .hbar button { width: 26px; display: grid; place-items: center; }
    .hbar .thumb { flex: 1; height: 24px; background: #cdcdcd; }
    .grow { background: #f0f0f0; display: grid; place-items: end; padding: 3px; border-top: 1px solid #000; border-left: 1px solid #000; }
  `;
  private cls(i: number, extra: string) {
    return `${extra} ${i === 8 ? "sel" : i === 7 ? "pre" : ""}`;
  }
  render() {
    const blank = [7, 8, 9, 10, 11, 12];
    return html`
      <div class="title">
        <svg width="23" height="23" viewBox="0 0 23 23" shape-rendering="crispEdges">
          <path d="M1 1h22v22h-22z"></path><path fill="#fff" d="M1 1h20v20h-20z"></path>
          <path fill="#4f4" d="M2 8h19v2h-19z M2 11h19v3h-19z M2 15h19v2h-19z M2 18h19v2h-19z"></path>
          <path fill="#f22" d="M3 2h3v3h-3z M10 2h3v3h-3z M16 2h3v3h-3z"></path>
          <path fill="none" stroke="#000" d="M.5 .5h20v20h-20z"></path>
          <path fill="none" stroke="#336" d="M1 6.500h20 M1 10.500h20 M1 14.500h20 M1 17.500h20 M7.500 1v20 M14.500 1v20"></path>
        </svg>
        <h2>Book1 *</h2>
        <div class="ctl">
          <button aria-label="minimize"><svg width="16" height="14"><path fill="#fff" stroke="#556" d="M1.500 9.500h13v4h-13z"></path></svg></button>
          <button aria-label="maximize"><svg width="18" height="16"><path fill="#fff" fill-rule="evenodd" stroke="#4b5870" d="M1.500 1.500h15v13h-15z M6.500 5.500h5v5h-5z"></path></svg></button>
          <button class="x" aria-label="close"><svg width="18" height="16" viewBox="0 0 18 16"><path fill="#fff" stroke="#5b4a55" d="M1 1h5l3 4l3-4h5l-5 7l5 7h-5l-3-4l-3 4h-5l5-7z"></path></svg></button>
        </div>
      </div>
      <div class="client">
        <div class="sheet">
          <table>
            <thead><tr><th class="corner"></th>${COLS.map((c, i) => html`<th class=${i === 8 ? "sel" : ""} scope="col">${c}</th>`)}</tr></thead>
            <tbody>
              ${LABELS.map(([name, cells]) => html`<tr><th scope="row">${mixed(name)}</th>${cells.map((c, i) => html`<td class=${this.cls(i, name === "F(x)=" ? "label fx" : "label")}>${mixed(c)}</td>`)}</tr>`)}
              ${DATA.map((row, r) => html`<tr><th class="num" scope="row">${r + 1}</th>${row.map((v, i) => html`<td class=${this.cls(i, v === null ? "" : "num")}>${v ?? ""}</td>`)}</tr>`)}
              ${blank.map((n) => html`<tr><th class="num" scope="row">${n < 12 ? n : ""}</th>${COLS.map((_, i) => html`<td class=${this.cls(i, "")}></td>`)}</tr>`)}
            </tbody>
          </table>
        </div>
        <div class="vbar">
          <button aria-label="up">${chevron(UP)}</button><span class="thumb"></span><button aria-label="down">${chevron(DOWN)}</button>
        </div>
        <div class="tabs">
          <button class="nav" aria-label="previous sheet"><svg width="6" height="10"><path fill="#555" d="M6 0v10l-6-5z"></path></svg></button>
          <button class="nav" aria-label="next sheet"><svg width="6" height="10"><path fill="#555" d="M0 0v10l6-5z"></path></svg></button>
          <span class="edge"><button class="tab">Sheet1</button></span>
          <span class="fill"></span>
          <div class="hbar"><button aria-label="left">${chevron(LEFT)}</button><span class="thumb"></span><button aria-label="right">${chevron(RIGHT)}</button></div>
        </div>
        <div class="grow"><svg width="10" height="10"><path fill="#b8b8b8" d="M7 0h3v2h-3z M4 4h2v2h-2z M7 4h3v2h-3z M0 8h3v2h-3z M4 8h2v2h-2z M7 8h3v2h-3z"></path></svg></div>
      </div>`;
  }
}

/* ---------- mini toolbar glyphs, 28x28 ---------- */
const line = (d: string, c = "#7f9dbf", w = 2) => svg`<path d=${d} fill="none" stroke=${c} stroke-width=${w}></path>`;
const area = (d: string, c = "#7f9dbf") => svg`<path d=${d} fill=${c}></path>`;
const word = (x: number, y: number, s: number, t: string, c = "#7f9dbf", f = "Liberation Sans", wt = "bold") =>
  svg`<text x=${x} y=${y} font-size=${s} fill=${c} font-family=${f} font-weight=${wt} text-anchor="middle">${t}</text>`;
const MINI1 = [
  [area("M0 14c7-10 21-10 28 0c-7 10-21 10-28 0z", "#8b8b8b"), area("M9 14a5 5 0 0 1 10 0a5 5 0 0 1-10 0z", "#aaa"), line("M2 26l25-25")],
  [line("M2 5h24 M2 1v8 M26 1v8 M6 2l-4 3l4 3 M22 2l4 3l-4 3"), line("M3 12h22v15h-22z M3 17h22 M9 12v15 M14 12v15 M20 12v15")],
  [area("M4 2h3v18h4l-6 7l-5-7h4z"), line("M13 4h14v20h-14z M13 9h14 M18 4v20 M22 4v20")],
  [line("M4 10a7 7 0 0 1 14 0a7 7 0 0 1-14 0z M16 16l9 9", "#8c9cb0"), line("M17 17l8 8", "#8c9cb0", 4)],
  [line("M1 24l3-6l3 3l3-14l3 12l3-13l3 12l3-11l2 8l3-6", "#7f9dbf", 1)],
  [area("M9 1h12v12h-12z M1 15h12v12h-12z M16 15h12v12h-12z"), word(15, 11, 11, "A", "#ddd"), word(7, 25, 11, "B", "#ddd"), word(22, 25, 11, "C", "#ddd")],
  [line("M3 12v15 M8 7v20 M13 3v24 M18 5v22 M23 9v18", "#979797"), line("M1 14c4-16 20-16 27-2", "#7f9dbf", 1), area("M11 1h4v4h-4z M1 11h4v4h-4z M22 7h4v4h-4z")],
  [line("M1 1h11l3 3v13h-14z M5 4h10 M4 8h10 M4 12h10", "#8e8e8e"), line("M1 19h26v8h-26z", "#8e8e8e"), line("M3 25l7-4l5 3l8-2", "#a99", 1), line("M16 6c6 0 8 3 8 8"), area("M19 12h9l-4 6z")],
  [line("M3 6h22 M10 5v-3h8v3"), area("M5 8h18l-1 19h-16z"), line("M10 11v12 M14 11v12 M18 11v12", "#b0b0b0")],
  [line("M1 4h20v20h-20z"), area("M5 20v-10l3 3l5-5l3 3l-5 5l3 4z", "#9ab4cf")],
];
const MINI2 = [
  [line("M0 14h28 M2 9v10 M26 9v10"), area("M9 14a5 5 0 0 1 10 0a5 5 0 0 1-10 0z")],
  [line("M14 1v26 M9 1h10 M9 27h10"), area("M9 14a5 5 0 0 1 10 0a5 5 0 0 1-10 0z")],
  [word(14, 19, 12, "NONE", "#7f9dbf", "Liberation Mono")],
  [word(14, 10, 12, "0.12", "#969696"), line("M2 14h22l-4-4 M26 18h-22l4 4", "#8fa5bd"), word(13, 29, 12, "0.123", "#969696"), area("M18 20h9l-4 5z", "#777")],
  [svg`<circle cx="14" cy="14" r="7" fill="none" stroke="#7f9dbf" stroke-width="5"></circle><circle cx="14" cy="14" r="11" fill="none" stroke="#7f9dbf" stroke-width="4" stroke-dasharray="5 4"></circle>`],
];
const big = (parts: unknown) => html`<svg width="28" height="28" viewBox="0 0 28 28">${parts}</svg>`;

/* ---------- app gallery ---------- */
const APPS: [string, boolean, unknown][] = [
  ["添加App", false, svg`<path fill="#f4f4f4" stroke="#1583c7" stroke-width="2" d="M1 1h40v40h-40z"></path><path fill="#0d7fc7" d="M0 0h42v6h-42z"></path>
    <path fill="#c6c6c6" d="M3 8h15v18h-15z"></path><path fill="none" stroke="#ccc" stroke-width="2" d="M21 10h6 M30 8h9v4h-9z M21 15h18v10h-18z M4 31h4 M10 29h8v4h-8z M4 37h4 M10 36h8v3h-8z"></path>
    <circle cx="34" cy="34" r="14" fill="#3fae3a"></circle><circle cx="34" cy="34" r="12" fill="#4cd03f"></circle><path fill="#fff" stroke="#2f8f2b" d="M31 25h6v6h6v6h-6v6h-6v-6h-6v-6h6z"></path>`],
  ["Stats\nAdvisor", false, svg`<path stroke="#4a5260" stroke-width="3" d="M24 23l23 24"></path><path fill="#e8c840" stroke="#d4ae2e" stroke-width="2" d="M23 2l1 13l9 4l-10 5l-3 10l-8-9l-9 1l5-10l-4-9l10 3z"></path>
    <path fill="none" stroke="#e8c840" stroke-width="2" d="M33 3v7 M30 6h7 M5 32v7 M2 35h7"></path>`],
  ["Simple Fit", true, svg`<path fill="#abcdec" d="M0 0h48v47h-48z"></path><path fill="none" stroke="#fff" stroke-width="2" d="M4 5v39h40"></path><path fill="#fff" d="M1 10l3-8l4 8z M40 40l7 4l-7 4z"></path>
    <path fill="none" stroke="#ffa6cf" stroke-width="3" d="M6 42c18-2 28-6 36-36"></path><g fill="#fff"><circle cx="11" cy="41" r="2"></circle><circle cx="20" cy="39" r="2"></circle><circle cx="29" cy="36" r="2"></circle><circle cx="34" cy="27" r="2"></circle><circle cx="41" cy="20" r="2"></circle><circle cx="43" cy="6" r="2"></circle></g>`],
  ["Sequential\nFit", false, svg`<g fill="none" stroke="#b9a6f2" stroke-width="4"><path d="M1 28h5c6 0 6-26 9-26s4 26 12 26"></path><path d="M10 35h5c6 0 6-26 9-26s4 26 14 26"></path><path d="M18 44h4c6 0 6-26 10-26s4 26 15 26"></path></g>
    <g fill="none" stroke="#a8246e" stroke-width="2"><path d="M1 28h5c6 0 6-26 9-26s4 26 12 26"></path><path d="M10 35h5c6 0 6-26 9-26s4 26 14 26"></path><path d="M18 44h4c6 0 6-26 10-26s4 26 15 26"></path></g>`],
  ["Send Graphs\nto Word", false, svg`<g transform="translate(0 4)"><path fill="#fff" stroke="#1a1a8c" stroke-width="2" d="M30 5h15v26h-15z"></path><path stroke="#1a1a8c" stroke-width="2" d="M33 10h8 M33 15h8 M33 20h8 M33 25h8"></path><path fill="#fff" stroke="#1a1a8c" d="M13 5l19-3v32l-19-3z"></path>
    <text x="22" y="23" text-anchor="middle" font-family="Open Sans" font-weight="bold" font-size="13" fill="#1a1a8c">W</text><path fill="#00f" d="M3 28h9v-4l8 6l-8 6v-4h-9z"></path></g>`],
  ["Send Graphs\nto PowerP...", false, svg`<path fill="#fff" stroke="#e08a74" stroke-width="2" d="M34 7h13v26h-13z"></path><circle cx="39" cy="15" r="4" fill="#d24726"></circle><path stroke="#d24726" stroke-width="3" d="M36 23h9 M36 28h9"></path><path fill="#fff" stroke="#e8a494" d="M17 5l18-4v38l-18-4z"></path>
    <text x="27" y="26" text-anchor="middle" font-family="Open Sans" font-size="17" fill="#e0644a">P</text><path fill="#d24726" d="M0 35h12v-4l7 7l-7 7v-4h-12z"></path>`],
  ["", false, svg`<path stroke="#900" stroke-width="2" d="M1 3h4 M1 7h4 M1 12h4"></path><path stroke="#080" stroke-width="2" d="M8 3h4 M8 7h4 M8 12h4"></path><path stroke="#009" stroke-width="2" d="M15 3h4 M15 7h4 M15 12h4"></path><ellipse cx="31" cy="15" rx="5" ry="3" fill="#a09020"></ellipse>`],
];

@customElement("app-root")
class AppRoot extends LitElement {
  static styles = css`
    * { box-sizing: border-box; }
    :host { display: flex; flex-direction: column; height: 100vh; overflow: hidden; position: relative;
      font: 17px "Open Sans", "Noto Sans CJK SC", sans-serif; color: #000; background: linear-gradient(90deg, #ebedfc, #f2f6fe); }
    button { border: 0; padding: 0; background: none; font: inherit; color: inherit; }
    svg { display: block; overflow: visible; }
    h2 { font: inherit; margin: 0; }
    .titlebar { display: flex; height: 34px; background: #fff; align-items: center; gap: 6px; padding: 0 2px; }
    .titlebar h1 { flex: 1; margin: 0; font: 19px/28px "Open Sans", sans-serif; }
    .controls { display: flex; }
    .sys { width: 70px; height: 34px; display: grid; place-items: center; }
    .menu { display: flex; height: 32px; align-items: center; padding: 0 0 2px 4px; }
    .menu .dots { width: 3px; height: 20px; margin-right: 2px; background: radial-gradient(#9a9aa2 50%, transparent 55%) 0 0 / 3px 4px; }
    .menu button { padding: 0 8px; white-space: pre; }
    .menu small { font-size: 16px; }
    u { text-underline-offset: 2px; }
    .row { display: flex; height: 33px; }
    .main { flex: 1; min-height: 0; display: flex; }
    .left { width: 66px; display: flex; gap: 1px; }
    .docktabs { width: 28px; display: flex; flex-direction: column; gap: 14px; padding-top: 4px; }
    .docktabs button { writing-mode: vertical-rl; text-orientation: sideways; width: 27px; background: #f0f0f0; border: solid #d4d4d8; border-width: 0 1px 1px 0; color: #6a6a6a; text-align: left; padding: 6px 0 27px; line-height: 25px; white-space: pre; font-family: "Noto Sans CJK SC", sans-serif; font-weight: 300; font-size: 18px; }
    .stage { flex: 1; min-width: 0; display: flex; }
    .canvas { flex: 1; background: #ababab; border: solid #696969; border-width: 2px 0 0 2px; border-bottom: 2px solid #fff; position: relative; }
    .center { flex: 1; display: flex; flex-direction: column; min-width: 0; }
    .plots { display: flex; height: 34px; padding-top: 1px; }
    .rtools { width: 31px; padding-left: 1px; }
    .rpanel { width: 229px; display: flex; flex-direction: column; }
    .head { display: flex; align-items: center; height: 33px; padding: 0 7px 0 5px; background: linear-gradient(#bccdd9, #d8e5f1); }
    .head h2 { flex: 1; padding-bottom: 2px; }
    .pin { display: flex; gap: 8px; align-items: center; }
    .objects { height: 148px; margin: 0 0 4px 1px; background: #fff; border: 2px solid #777; border-right-width: 1px; box-shadow: inset 0 0 0 1px #ddd; padding: 2px 1px; font: 18px "Liberation Sans", sans-serif; }
    .node { display: flex; align-items: center; height: 30px; gap: 3px; padding-left: 1px; }
    .node.sel { background: #0078d7; color: #fff; padding-left: 10px; gap: 23px; outline: 1px dotted #d8a060; outline-offset: -1px; }
    .apps { flex: 1; min-height: 0; display: flex; background: #f0f0f0; border: solid #fff; border-width: 0 3px 0 0; }
    .strip { width: 34px; display: flex; flex-direction: column; align-items: center; }
    .step { height: 16px; width: 20px; display: grid; place-items: center; }
    .ptab { position: relative; width: 34px; height: 68px; writing-mode: vertical-rl; text-orientation: sideways; display: grid; place-items: center; padding-left: 6px; margin-top: -8px; font-size: 18px; line-height: 20px; font-family: "Noto Sans CJK SC", sans-serif; }
    .ptab svg { position: absolute; inset: 0; }
    .ptab span { position: relative; }
    .ptab.on { font-weight: 700; z-index: 1; height: 64px; margin-top: 5px; }
    .list { flex: 1; background: #fff; border: solid #777; border-width: 2px 0 1px 1px; overflow: hidden; padding-top: 3px; }
    .app { display: flex; flex-direction: column; align-items: center; width: 116px; height: 113px; gap: 3px; white-space: pre; text-align: center; font-size: 18px; line-height: 24px; }
    .app.off { color: #6d6d6d; }
    .scroll { width: 24px; display: flex; flex-direction: column; align-items: center; background: #f0f0f0; padding: 2px 0 1px; }
    .scroll button { height: 28px; display: grid; place-items: center; }
    .scroll .thumb { width: 100%; height: 484px; background: #cdcdcd; margin-bottom: auto; }
    .status { display: flex; height: 29px; background: #f0f0f0; border-top: 1px solid #d0d0d4; align-items: center; justify-content: flex-end; padding-top: 2px; }
    .status span { border-left: 1px solid #d4d4d4; padding: 0 8px; height: 22px; line-height: 22px; white-space: nowrap; }
    .status span:last-child { padding: 0 0 0 10px; }
    book-window { position: absolute; left: 201px; top: 148px; width: 1169px; height: 483px; }
    .marker { position: absolute; left: 1144px; top: 179px; width: 117px; height: 51px; border: 5px solid #ff2012; border-radius: 3px; }
    .mini { position: absolute; left: 1320px; top: 232px; width: 369px; height: 97px; background: rgba(190, 190, 190, 0.45); border: 1px solid rgba(150, 150, 150, 0.35); padding: 7px 3px; display: flex; flex-direction: column; gap: 14px; }
    .mini .tools { display: flex; gap: 8px; opacity: 0.6; padding-left: 4px; }
    .mini .letters { opacity: 0.7; display: flex; gap: 8px; width: 100px; }
    .mini .letters b { width: 28px; text-align: center; font: 32px/28px "Liberation Serif", serif; color: #5f9ad6; }
    .mini .more { position: absolute; bottom: 3px; left: 174px; width: 21px; height: 3px; background: radial-gradient(#888 50%, transparent 55%) 0 0 / 7px 3px; }
    .level { position: absolute; left: 3px; top: 940px; width: 8px; height: 59px; border-radius: 4px; border: 1px solid #f4f4f4; background: linear-gradient(#9b9ba3 19px, #22b866 19px, #2fd070 45px, #74f07c); box-shadow: 0 1px 5px #c4c8d4; }
    .badge { position: absolute; left: 1px; bottom: 0; }
    .brand { position: absolute; right: 8px; bottom: 6px; line-height: 24px; color: rgba(120, 120, 120, 0.6); text-shadow: 0 0 1px #fff; }
    .under { position: absolute; left: 72px; bottom: 0; width: 432px; height: 2px; background: #cacaca; }
  `;
  render() {
    const bars = (rows: BarRow[], active = false) =>
      rows.map(([entries, opt]) => html`<tool-bar .entries=${entries} mode=${active ? "" : opt} active=${active ? opt : ""}></tool-bar>`);
    const headTools = html`<div class="pin">
      <button aria-label="menu"><svg width="10" height="5"><path d="M0 0h10l-5 5z"></path></svg></button>
      <button aria-label="pin"><svg width="7" height="9" shape-rendering="crispEdges"><path fill="none" stroke="#000" d="M1.500 5v-4.500h4v4.500 M0 5.500h7 M3.500 5v4 M4.500 0v5"></path></svg></button>
      <button aria-label="close"><svg width="8" height="8"><path stroke="#000" stroke-width="2" d="M0 0l8 8 M8 0l-8 8"></path></svg></button></div>`;
    return html`
      <header class="titlebar">
        <svg width="23" height="23" viewBox="0 0 23 23">
          <path fill="#eaf4fb" stroke="#9cc4de" d="M4.500 .5h18v18h-18z M10.500 0v18 M16.500 0v18 M4 6.500h18 M4 12.500h18"></path>
          <circle cx="10" cy="13" r="10" fill="#ee7a62"></circle><circle cx="9" cy="10" r="6" fill="#f7b3a2"></circle>
          <path fill="none" stroke="#7a4a78" stroke-width="2" d="M4 18l3-4l3-4l3 3l3-5"></path>
        </svg>
        <h1>OriginPro 2021 - UNTITLED *</h1>
        <div class="controls">
          <button class="sys" aria-label="minimize"><svg width="15" height="2"><path d="M0 0h15v1h-15z"></path></svg></button>
          <button class="sys" aria-label="restore"><svg width="16" height="16"><path fill="none" stroke="#000" d="M.5 3.500h11v12h-11z M3.500 3v-2.500h11v12h-3"></path></svg></button>
          <button class="sys" aria-label="close"><svg width="16" height="16"><path stroke="#000" d="M.5 .5l15 15 M15.500 .5l-15 15"></path></svg></button>
        </div>
      </header>
      <nav class="menu"><span class="dots"></span>${MENUS.map(([t, k]) => html`<button>${t}<small>(<u>${k}</u>)</small></button>`)}</nav>
      <div class="row">${bars(ROW1, true)}</div>
      <div class="row">${bars(ROW2)}</div>
      <div class="main">
        <aside class="left">
          <div class="docktabs"><button>项目管理器  (1)</button><button>消息日志</button><button>提示日志</button></div>
          <div><tool-bar mode="column broad" active="pointer" .entries=${LEFT_TOOLS}></tool-bar><tool-bar mode="column" .entries=${LEFT_OBJECTS}></tool-bar></div>
        </aside>
        <div class="stage">
          <div class="center">
            <main class="canvas"><book-window></book-window><div class="marker"></div></main>
            <div class="plots">${bars(BOTTOM)}</div>
          </div>
          <div class="rtools"><tool-bar mode="column" .entries=${RIGHT_GRAPH}></tool-bar><tool-bar mode="column" .entries=${RIGHT_ALIGN}></tool-bar></div>
          <aside class="rpanel">
            <div class="head"><h2>对象管理器</h2>${headTools}</div>
            <div class="objects">
              <div class="node">
                <svg width="18" height="18" viewBox="0 0 18 18"><path fill="#f2f2f4" stroke="#999" d="M.5 .5h17v17h-17z"></path><path fill="#3558b0" d="M3 8h12v2h-12z"></path></svg>
                <svg width="24" height="18" viewBox="0 0 24 18"><path fill="#e3b24a" stroke="#8a6a28" d="M1 17v-15h7l2 2h9v4"></path><path fill="#ffd36a" stroke="#9a7020" d="M1 17l4-11h18l-4 11z"></path></svg>
                <span>Book1</span>
              </div>
              <div class="node sel"><svg width="13" height="22"><path fill="none" stroke="#9fb4c8" stroke-dasharray="1 1" d="M.5 0v12.500h12"></path></svg><span>Sheet1</span></div>
            </div>
            <div class="head"><h2>Apps</h2>${headTools}</div>
            <div class="apps">
              <div class="strip">
                ${["M0 0h8v1h-8z M0 6h8l-4-4z", "M0 5h8l-4-4z", "M0 1h8l-4 4z", "M0 0h8l-4 4z M0 5h8v1h-8z"].map((d, i) => html`<button class="step" aria-label="scroll tabs ${i + 1}"><svg width="8" height="7"><path d=${d}></path></svg></button>`)}
                <button class="ptab on"><svg width="34" height="64"><path fill="#fff" stroke="#555" d="M34.500 .5l-30 15v32l30 15"></path></svg><span>所有</span></button>
                <button class="ptab"><svg width="34" height="68"><path fill="#f8f8f8" stroke="#555" d="M18.500 0l-14 8v50l30 15"></path></svg><span>连接器</span></button>
              </div>
              <div class="list">${APPS.map(([t, off, art]) => html`<button class=${classMap({ app: true, off })} aria-label=${t || "app"}><svg width="48" height="48" viewBox="0 0 48 48">${art}</svg><span>${t}</span></button>`)}</div>
              <div class="scroll"><button aria-label="up">${chevron(UP)}</button><span class="thumb"></span><button aria-label="down">${chevron(DOWN)}</button></div>
            </div>
          </aside>
        </div>
      </div>
      <footer class="status"><span>平均值=0 求和=0 计数=0</span><span>AU : 开</span><span>1: [Book1]Sheet1!9 弧度</span></footer>
      <div class="mini">
        <div class="tools">${MINI1.map(big)}</div>
        <div class="tools"><div class="letters"><b>X</b><b>Y</b><b>Z</b></div>${MINI2.map(big)}</div>
        <span class="more"></span>
      </div>
      <div class="level"></div>
      <div class="under"></div>
      <svg class="badge" width="46" height="46" viewBox="0 0 46 46">
        <defs><radialGradient id="ball" cx="50%" cy="95%" r="95%"><stop offset="0" stop-color="#ffe0c8"></stop><stop offset="0.450" stop-color="#e4654a"></stop><stop offset="1" stop-color="#d98a7a"></stop></radialGradient></defs>
        <circle cx="23" cy="23" r="22" fill="url(#ball)" stroke="#d64532" stroke-width="2"></circle>
        <path fill="none" stroke="#fff" stroke-opacity=".5" d="M15 6v34 M26 6v34 M36 8v30 M6 14h34 M6 23h34 M6 32h34"></path>
        <path fill="none" stroke="#5f86b0" stroke-width="2" d="M15 33l5-4l6-15l5 4l5-9"></path>
        <g fill="#15568f"><circle cx="15" cy="33" r="2"></circle><circle cx="20" cy="29" r="2"></circle><circle cx="26" cy="14" r="2"></circle><circle cx="31" cy="18" r="2"></circle><circle cx="36" cy="9" r="2"></circle></g>
      </svg>
      <div class="brand">CSDN @GNSS菜鸟</div>`;
  }
}
